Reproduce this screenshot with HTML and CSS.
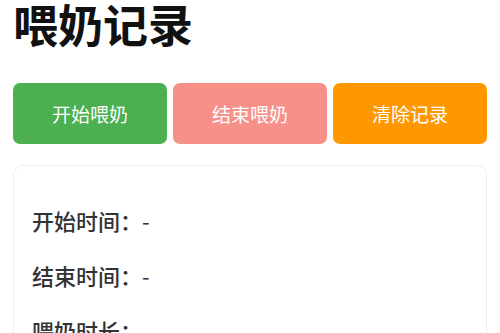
FILE: index.html
```html
<!DOCTYPE html>
<html lang="zh">
<head>
  <meta charset="UTF-8" />
  <meta name="viewport" content="width=device-width, initial-scale=1" />
  <title>喂奶记录</title>
  <link rel="stylesheet" href="styles.css">
</head>
<body>
  <h1>喂奶记录</h1>

  <div class="botoes">
    <button class="btn-iniciar">开始喂奶</button>
    <button class="btn-fim">结束喂奶</button>
    <button class="btn-limpar">清除记录</button>
  </div>

  <div class="card">
    <p><span class="rotulo">开始时间：</span><span id="inicio">-</span></p>
    <p><span class="rotulo">结束时间：</span><span id="fim">-</span></p>
    <p><span class="rotulo">喂奶时长：</span><span id="duracao">-</span></p>
  </div>
</body>
</html>
```

FILE: styles.css
```css
body {
  font-family: "Noto Sans CJK SC", "Noto Sans", sans-serif;
  background: #ffffff;
  color: #333;
  margin: 0;
  padding: 0 13px;
}
h1 {
  font-size: 45px;
  line-height: 48px;
  font-weight: 700;
  color: #111;
  margin: 0 0 35px 0;
}
.botoes {
  display: grid;
  grid-template-columns: repeat(3, 1fr);
  gap: 6px;
}
button {
  font-family: inherit;
  height: 61px;
  border: none;
  border-radius: 7px;
  color: #ffffff;
  font-size: 19px;
  cursor: pointer;
}
.btn-iniciar {
  background-color: #4caf50;
}
.btn-fim {
  background-color: #f8908a;
}
.btn-limpar {
  background-color: #ff9800;
}
.card {
  margin-top: 21px;
  border: 1px solid #eeeeee;
  border-radius: 10px;
  padding: 14px 18px;
  min-height: 300px;
}
.card p {
  font-size: 22px;
  line-height: 30px;
  margin: 25px 0;
}
.rotulo {
  font-weight: 500;
}
```
